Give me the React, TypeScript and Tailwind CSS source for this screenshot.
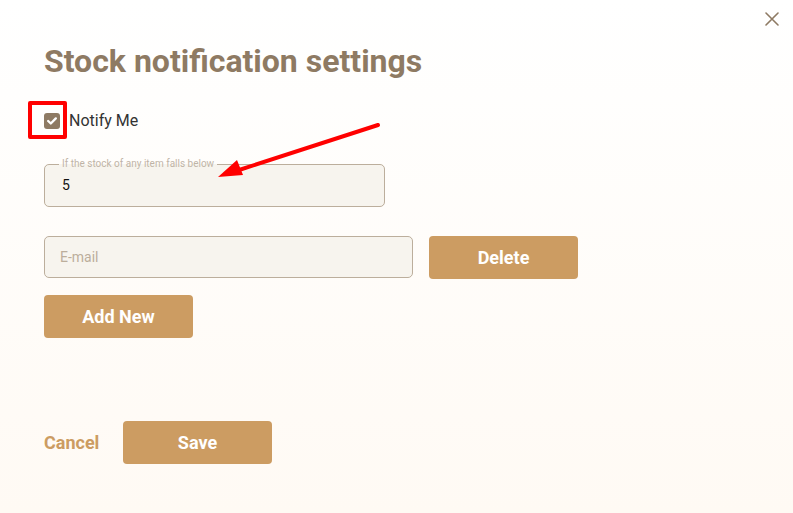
import React from "react";

export default function App() {
  return (
    <div
      className="relative w-[793px] h-[513px] overflow-hidden bg-gradient-to-b from-[#ffffff] to-[#fffaf4]"
      style={{ fontFamily: "Roboto, 'Liberation Sans', sans-serif" }}
    >
      {/* close */}
      <button className="absolute left-[765px] top-[12px] w-[14px] h-[14px]">
        <svg width="14" height="14" viewBox="0 0 14 14">
          <path d="M1 1 L13 13 M13 1 L1 13" stroke="#8e7a63" strokeWidth="1.6" strokeLinecap="round" />
        </svg>
      </button>

      <div className="pl-[44px] pt-[40px] flex flex-col">
        <h1 className="text-[32px] leading-[42px] font-bold text-[#8e7a63]">
          Stock notification settings
        </h1>

        <div className="mt-[30px] flex items-center h-[18px] relative">
          <span className="w-[16px] h-[16px] rounded-[3px] bg-[#8e7a63] flex items-center justify-center">
            <svg width="10" height="8" viewBox="0 0 10 8">
              <path d="M1.2 4 L3.8 6.5 L8.8 1.4" stroke="white" strokeWidth="2.3" fill="none" strokeLinecap="round" strokeLinejoin="round" />
            </svg>
          </span>
          <span className="ml-[9px] text-[16px] text-[#333333]">Notify Me</span>
          <span className="absolute left-[-16px] top-[-11px] w-[39px] h-[38px] border-[4px] border-[#ff0000] rounded-[2px]" />
        </div>

        <fieldset className="mt-[29px] w-[341px] h-[48px] border border-[#bcae9c] rounded-[5px] bg-[#f7f4ee] px-[13px] pb-[6px] relative">
          <legend className="px-[3px] text-[10px] leading-[10px] text-[#bfb4a6] ml-[1px]">
            If the stock of any item falls below
          </legend>
          <div className="text-[14px] text-[#111] pl-[4px] pt-[8px] leading-[16px]">5</div>
        </fieldset>

        <div className="mt-[29px] flex gap-[16px]">
          <div className="w-[369px] h-[42px] border border-[#bcae9c] rounded-[5px] bg-[#f7f4ee] flex items-center pl-[15px] text-[14px] text-[#bcae9c]">
            E-mail
          </div>
          <button className="w-[149px] h-[43px] rounded-[4px] bg-[#cc9c62] text-white font-bold text-[18px]">
            Delete
          </button>
        </div>

        <button className="mt-[16px] w-[149px] h-[43px] rounded-[4px] bg-[#cc9c62] text-white font-bold text-[18px]">
          Add New
        </button>

        <div className="mt-[83px] flex items-center">
          <span className="text-[18px] font-bold text-[#cc9c62] w-[79px]">Cancel</span>
          <button className="w-[149px] h-[43px] rounded-[4px] bg-[#cc9c62] text-white font-bold text-[18px]">
            Save
          </button>
        </div>
      </div>

      {/* annotation arrow */}
      <svg className="absolute left-0 top-0 pointer-events-none" width="793" height="513">
        <line x1="378" y1="125" x2="236" y2="171" stroke="#ff0000" strokeWidth="4" strokeLinecap="round" />
        <polygon points="218,177 237,160 243,175" fill="#ff0000" />
      </svg>
    </div>
  );
}
